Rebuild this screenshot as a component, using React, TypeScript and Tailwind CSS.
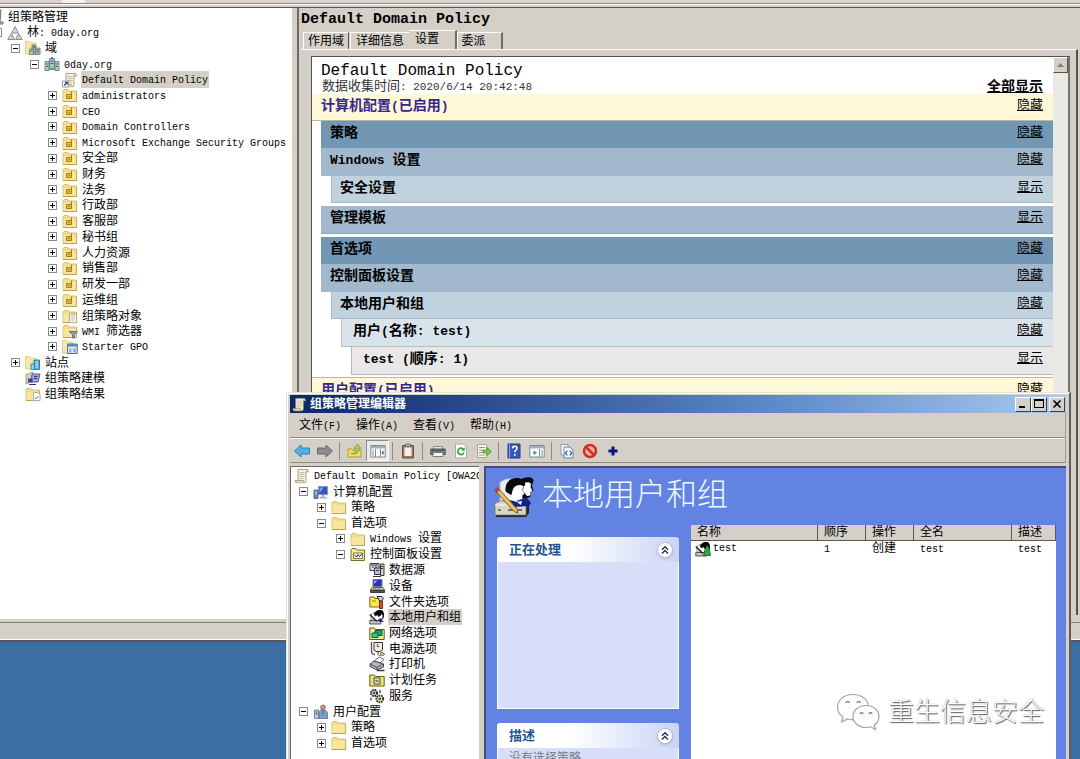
import React from "react";

/* ---------- text ---------- */

type Size = "xs" | "sm" | "md";

const latinSize: Record<Size, string> = {
  xs: "text-[10px]",
  sm: "text-[11px]",
  md: "text-[13px]",
};

function Mixed({ text, size = "xs" }: { text: string; size?: Size }) {
  return (
    <>
      {text.split(/([\x20-\x7e]+)/).map((part, i) =>
        i % 2 === 1 ? (
          <span key={i} className={latinSize[size]}>
            {part}
          </span>
        ) : (
          part
        ),
      )}
    </>
  );
}

/* ---------- small icons (16 x 16) ---------- */

function Svg({ children, className = "size-4" }: { children: React.ReactNode; className?: string }) {
  return (
    <svg viewBox="0 0 16 16" className={`shrink-0 ${className}`} fill="none" aria-hidden="true">
      {children}
    </svg>
  );
}

const FolderShape = () => (
  <>
    <path d="M1 3.500 2 2.500h4l1 1.500h7.500v10.500H1z" fill="#f3dd8c" stroke="#d3b45c" strokeWidth=".8" />
    <path d="M1.500 6h13v8h-13z" fill="#f8e6a0" />
    <path d="M1 14.500h13.600V5" stroke="#b89a48" strokeWidth=".8" />
  </>
);

const SmallFolderShape = () => (
  <path d="M.5 1.500h4l1 1.500H11v11H.5z" fill="#f6e7a4" stroke="#dcc87c" strokeWidth=".8" />
);

const ScrollShape = () => (
  <>
    <path d="M4 1.500h9.500c-1.500 1-1.500 2-1.500 3V13c0 1-.7 1.700-2 1.700H2.500C4 14 4 13 4 12z" fill="#f7f1d8" stroke="#9a9588" strokeWidth=".9" />
    <path d="M12 1.500c1.600 0 2.500.8 2.500 2.500H12M2.500 14.500c-1.300 0-1.700-1-1.500-2h8.500c0 1 .2 2 1.500 2" fill="#e3d9b0" stroke="#9a9588" strokeWidth=".8" />
    <path d="M5.500 4.500h5M5.500 6.500h5M5.500 8.500h5M5.500 10.500h4" stroke="#b5ae98" strokeWidth=".8" />
  </>
);

const icons: Record<string, React.ReactNode> = {
  root: (
    <>
      <path d="M6 1h7l-1 12h3v2H3V9z" fill="#b9bcc0" stroke="#6d7278" />
      <path d="M8 4h3M7 7h4" stroke="#555" />
    </>
  ),
  forest: (
    <>
      <path d="M8 1.500 11.200 8H4.800z" fill="#eceff0" stroke="#84898c" />
      <path d="M4.300 8.500 7.500 14.500H.8zM11.700 8.500l3.500 6H8.500z" fill="#dfe4e4" stroke="#84898c" />
      <path d="M8 1.500v6M4.300 8.500v6M11.700 8.500v6" stroke="#a7b0ae" strokeWidth=".8" />
    </>
  ),
  domains: (
    <>
      <SmallFolderShape />
      <path d="M7 5h4v9H7z" fill="#9aa9a6" stroke="#64716d" strokeWidth=".8" />
      <path d="M4.500 9h4v5.500h-4zM11 8h4v6.500h-4z" fill="#b6c8bd" stroke="#64716d" strokeWidth=".8" />
      <path d="M8 7h2M12 10h2M5.500 11h2M12 12h2" stroke="#3e5c4c" />
    </>
  ),
  domain: (
    <>
      <path d="M5.500 2.500h5v11h-5z" fill="#a9bccb" stroke="#5d7282" strokeWidth=".8" />
      <path d="M1 5.500h4v9H1zM11 5.500h4v9h-4z" fill="#b4cbb9" stroke="#5f7a6a" strokeWidth=".8" />
      <path d="M7 1h2v2H7z" fill="#56809a" />
      <path d="M6.500 5h3M6.500 7.500h3M2 8h2M12 8h2M2 10.500h2M12 10.500h2" stroke="#40687c" />
      <path d="M6.500 12.500h3" stroke="#46b04e" />
    </>
  ),
  link: (
    <>
      <ScrollShape />
      <path d="M.5 9h6v6h-6z" fill="#fff" stroke="#88888f" strokeWidth=".8" />
      <path d="M2 13.500 5 10.500M2.800 10.300H5.200v2.400" stroke="#3a3480" strokeWidth="1.100" />
    </>
  ),
  ou: (
    <>
      <FolderShape />
      <path d="M4.500 7.500h5v4h-5z" fill="#e7c33e" stroke="#a07c1a" />
      <path d="M9.500 4.500v5M6 9.500h2" stroke="#a07c1a" />
    </>
  ),
  gpo: (
    <>
      <FolderShape />
      <path d="M7.500 6h7v7.500c0 1-.5 1.200-1.300 1.200H6.800c.8-.3.700-1 .7-2z" fill="#fbf8e8" stroke="#a09a80" strokeWidth=".8" />
      <path d="M9 8h4M9 10h4M9 12h3" stroke="#b3ab8f" strokeWidth=".8" />
    </>
  ),
  wmi: (
    <>
      <FolderShape />
      <path d="M7 8.500h8.500l-3 3v3.500h-2v-3.500z" fill="#8a9cb4" stroke="#51637c" strokeWidth=".8" />
    </>
  ),
  starter: (
    <>
      <SmallFolderShape />
      <path d="M5.500 5h9.800v9.500H5.500z" fill="#dde8f5" stroke="#51709c" />
      <path d="M5.500 5h9.800v2.500H5.500z" fill="#5c86c0" />
      <path d="M7 9.500h2.500v4H7zM11 9.500h3v4h-3z" fill="#96b4dc" />
    </>
  ),
  sites: (
    <>
      <SmallFolderShape />
      <path d="M9 5h5.500v9.500H9z" fill="#4db2dc" stroke="#2077a4" strokeWidth=".9" />
      <path d="M6 9h3.500v5.500H6z" fill="#8ed0e8" stroke="#2077a4" strokeWidth=".8" />
      <path d="M10.500 7h2.500M10.500 9.500h2.500M10.500 12h2.500" stroke="#e4f6fc" />
    </>
  ),
  modeling: (
    <>
      <path d="M1 4.500 8 2v9l-7 3z" fill="#d8d4b8" stroke="#8c8c84" strokeWidth=".8" />
      <path d="M7 4h8l-2 8H6z" fill="#9fa4d8" stroke="#4a4c92" strokeWidth=".9" />
      <path d="M3 8.500h4.500v4H3z" fill="#40428c" />
      <path d="M9 6.500h3.500M8.700 8.500H12M4 14.500h7" stroke="#33357a" />
    </>
  ),
  results: (
    <>
      <FolderShape />
      <path d="M8.500 6.500H13l2 2v6.200H8.500z" fill="#fff" stroke="#969a9e" strokeWidth=".8" />
      <path d="M10 11.500l1.200 1.500 2.300-3" stroke="#5b7c9c" />
    </>
  ),
  scroll: <ScrollShape />,
  computer: (
    <>
      <path d="M5.500 2.500h9v8h-9z" fill="#3056c8" stroke="#8c96a6" />
      <path d="M6.500 3.500h4l-3.500 5h-.5z" fill="#7ea0f0" />
      <path d="M8.500 11h3v2h-3zM6.500 13h7.500v1.500H6.500z" fill="#a7afba" />
      <path d="M1 6h4v8.500H1z" fill="#6c86ae" stroke="#40577c" strokeWidth=".8" />
      <path d="M2 8h2M2 10h2" stroke="#d8e4f4" />
    </>
  ),
  user: (
    <>
      <circle cx="10" cy="3.500" r="2.500" fill="#c59674" stroke="#77533c" strokeWidth=".6" />
      <path d="M6 14.500V9c0-2 1.500-3 4-3s4.500 1 4.500 3.500v5z" fill="#7ba0c8" stroke="#4f7399" strokeWidth=".8" />
      <path d="M1.500 6h4v8.500h-4z" fill="#c2ccd4" stroke="#64727f" strokeWidth=".8" />
      <path d="M2.500 8h2M2.500 10h2M10 6.500v4" stroke="#3b5872" />
    </>
  ),
  folder: <FolderShape />,
  control: (
    <>
      <path d="M1 3.500 2 2.500h4l1 1.500h7.500v10.500H1z" fill="#f4e98a" stroke="#77702c" />
      <path d="M3.500 7h9v5.500h-9z" fill="#fffdd8" stroke="#555" strokeWidth=".8" />
      <path d="m4.500 9 2 2 1.500-2.500 1.500 2L12 8" stroke="#222" />
    </>
  ),
  data: (
    <>
      <path d="M1 1.500h9v7H1z" fill="#e0e2e8" stroke="#444" />
      <path d="M2 3h7M3 5h2M6 5h2" stroke="#333" />
      <path d="M5.500 6h6v6.500h-6z" fill="#b8c0e8" stroke="#333" />
      <path d="M11.500 2h3.500v11.500h-3.500z" fill="#d4d4d4" stroke="#333" />
      <path d="M12 4.500h2M12 6.500h2M7 8.500h3M4 14.500h8" stroke="#333" />
    </>
  ),
  device: (
    <>
      <path d="M4 1.500h9v7H4z" fill="#2a34b8" stroke="#777" />
      <path d="M5 2.500h3.500L5 6z" fill="#8fa0ff" />
      <path d="M3 9.500h11l1.500 2.500H1.500z" fill="#d4d4dc" stroke="#444" strokeWidth=".8" />
      <path d="M1.500 12.500h14v2h-14z" fill="#4b4ba0" stroke="#222" strokeWidth=".8" />
      <path d="M4 10.800h8" stroke="#555" strokeDasharray="1 1" />
    </>
  ),
  folderopt: (
    <>
      <path d="M.8 3h4l1 1.500h5V13H.8z" fill="#ffe94c" stroke="#776a10" />
      <path d="M8 2.500h5l1.500 2-2 2.500h-2z" fill="#c8ccd2" stroke="#222" strokeWidth=".9" />
      <path d="M10.500 7h3v7.500h-3z" fill="#e04838" stroke="#511" strokeWidth=".8" />
      <path d="M3 7h4" stroke="#a08c10" />
    </>
  ),
  people: (
    <>
      <path d="M2 5.500 6 3l1.500 8H2z" fill="#fff" stroke="#666" strokeWidth=".7" />
      <path d="M5 6c0-3 3-5 6-5s4 2 4 5c0 2-.5 3.500-1.500 4.500L12 6.500 9 8z" fill="#060608" />
      <path d="M6 7.500 8.500 6l1.500 5-3 1zM12 5l1.500 1v3L12 10z" fill="#fff" />
      <path d="M.8 11.500h11v3.500H.8z" fill="#c6c6c0" stroke="#333" strokeWidth=".8" />
      <path d="M8 11.500 12 9l2.500 4h-3z" fill="#1c2490" />
      <path d="m.8 5.500 7 7" stroke="#222" strokeWidth="1.400" />
    </>
  ),
  network: (
    <>
      <path d="M.8 3h4.500l1 1.500h8.900v10H.8z" fill="#f6eb94" stroke="#5d5720" />
      <path d="M6 5.500h7v5H6z" fill="#18a478" stroke="#063" />
      <path d="M3 8h6v4.500H3z" fill="#36c898" stroke="#063" />
    </>
  ),
  power: (
    <>
      <path d="M2.500 1v9c0 2 1 3.500 3.500 3.500" stroke="#555" strokeWidth="1.300" />
      <path d="M5 1.500h8.500v7.500L11 10.500H7L5 9z" fill="#f0f0ea" stroke="#333" />
      <path d="M8.500 3v2.500h2" stroke="#d03838" strokeWidth="1.200" />
      <path d="M9 10.500v2c0 1.500 1 2 2.500 2" stroke="#333" />
      <path d="m11 12.500 2-1.500 2.500 2-2 2z" fill="#e8dc6c" stroke="#333" strokeWidth=".8" />
    </>
  ),
  printer: (
    <>
      <path d="m5 5 5.500-4L15 3.500 11 7z" fill="#fff" stroke="#555" strokeWidth=".9" />
      <path d="M1 8 5 5l9.500 3v3L8 14 1 10.500z" fill="#b4b8bc" stroke="#333" strokeWidth=".9" />
      <path d="m1 8 7 3.500L14.500 8M8 11.500V14" stroke="#444" strokeWidth=".9" />
      <path d="M8 14.500h7.500" stroke="#246" strokeWidth="1.500" />
    </>
  ),
  schedule: (
    <>
      <path d="M.8 3h4.500l1 1.500h8.900v9.500H.8z" fill="#eee466" stroke="#66601c" />
      <path d="M5 6h6v6H5z" fill="#fffff0" stroke="#444" />
      <path d="M7 7.500v3M9 7.500v3M6.500 9h3" stroke="#444" strokeWidth=".8" />
    </>
  ),
  services: (
    <>
      <circle cx="5" cy="5" r="3" fill="#e4e4e4" stroke="#222" strokeWidth="2" strokeDasharray="1.600 .8" />
      <circle cx="5" cy="5" r="1.200" fill="#444" />
      <circle cx="10.800" cy="10.800" r="3.400" fill="#eee6a0" stroke="#333" strokeWidth="2" strokeDasharray="1.600 .8" />
      <circle cx="10.800" cy="10.800" r="1.400" fill="#555" />
      <path d="M2 9.500v3M11 2v3" stroke="#555" strokeWidth="1.500" />
    </>
  ),
};

/* ---------- tree ---------- */

type Node = { depth: 0 | 1 | 2 | 3 | 4; icon: string; label: string; open?: boolean; selected?: boolean };

function Expander({ open }: { open?: boolean }) {
  if (open === undefined) return <span className="w-[9px] shrink-0" />;
  return (
    <button
      aria-label={open ? "折叠" : "展开"}
      className="flex size-[9px] shrink-0 items-center justify-center border border-[#8a8a8a] bg-white"
    >
      <svg viewBox="0 0 5 5" className="size-[5px]" shapeRendering="crispEdges" aria-hidden="true">
        <path d={open ? "M0 2h5v1H0z" : "M0 2h5v1H0zM2 0h1v5H2z"} fill="#000" />
      </svg>
    </button>
  );
}

function Tree({ nodes, indent, className }: { nodes: Node[]; indent: string[]; className: string }) {
  return (
    <ul className={`flex flex-col pt-px ${className}`}>
      {nodes.map((n, i) => (
        <li key={i} className={`flex min-h-0 flex-1 items-center ${indent[n.depth]}`}>
          <Expander open={n.open} />
          <span className="ml-[5px] mr-[3px] flex">
            <Svg>{icons[n.icon]}</Svg>
          </span>
          <span
            className={`whitespace-pre px-px pt-0.5 text-xs leading-[14px] ${n.selected ? "bg-[#d4d0c8]" : ""}`}
          >
            <Mixed text={n.label} />
          </span>
        </li>
      ))}
    </ul>
  );
}

const ous: Node[] = [
  "administrators",
  "CEO",
  "Domain Controllers",
  "Microsoft Exchange Security Groups",
  "安全部",
  "财务",
  "法务",
  "行政部",
  "客服部",
  "秘书组",
  "人力资源",
  "销售部",
  "研发一部",
  "运维组",
].map((label) => ({ depth: 4, icon: "ou", label, open: false }));

const consoleNodes: Node[] = [
  { depth: 0, icon: "root", label: "组策略管理" },
  { depth: 1, icon: "forest", label: "林: 0day.org", open: true },
  { depth: 2, icon: "domains", label: "域", open: true },
  { depth: 3, icon: "domain", label: "0day.org", open: true },
  { depth: 4, icon: "link", label: "Default Domain Policy", selected: true },
  ...ous,
  { depth: 4, icon: "gpo", label: "组策略对象", open: false },
  { depth: 4, icon: "wmi", label: "WMI 筛选器", open: false },
  { depth: 4, icon: "starter", label: "Starter GPO", open: false },
  { depth: 2, icon: "sites", label: "站点", open: false },
  { depth: 2, icon: "modeling", label: "组策略建模" },
  { depth: 2, icon: "results", label: "组策略结果" },
];

const editorNodes: Node[] = [
  { depth: 0, icon: "scroll", label: "Default Domain Policy [OWA2C" },
  { depth: 1, icon: "computer", label: "计算机配置", open: true },
  { depth: 2, icon: "folder", label: "策略", open: false },
  { depth: 2, icon: "folder", label: "首选项", open: true },
  { depth: 3, icon: "folder", label: "Windows 设置", open: false },
  { depth: 3, icon: "control", label: "控制面板设置", open: true },
  { depth: 4, icon: "data", label: "数据源" },
  { depth: 4, icon: "device", label: "设备" },
  { depth: 4, icon: "folderopt", label: "文件夹选项" },
  { depth: 4, icon: "people", label: "本地用户和组", selected: true },
  { depth: 4, icon: "network", label: "网络选项" },
  { depth: 4, icon: "power", label: "电源选项" },
  { depth: 4, icon: "printer", label: "打印机" },
  { depth: 4, icon: "schedule", label: "计划任务" },
  { depth: 4, icon: "services", label: "服务" },
  { depth: 1, icon: "user", label: "用户配置", open: true },
  { depth: 2, icon: "folder", label: "策略", open: false },
  { depth: 2, icon: "folder", label: "首选项", open: false },
];

/* ---------- settings report ---------- */

const reportRows = [
  { text: "计算机配置(已启用)", action: "隐藏", cls: "h-[27px] pl-[9px] bg-[#fff8d8] border-b border-[#b9b79c] text-[#33278c]" },
  { text: "策略", action: "隐藏", cls: "h-[27px] ml-[9px] pl-[9px] bg-[#7197b4]" },
  { text: "Windows 设置", action: "隐藏", cls: "h-7 ml-[9px] pl-[9px] bg-[#a2b9cd]" },
  { text: "安全设置", action: "显示", cls: "h-[27px] ml-[19px] mb-[3px] pl-2 bg-[#c0d2de] border-b border-l border-[#a9b8c4]" },
  { text: "管理模板", action: "显示", cls: "h-7 ml-[9px] mb-[3px] pl-[9px] bg-[#a2b9cd] border-b border-[#8fa3b3]" },
  { text: "首选项", action: "隐藏", cls: "h-[27px] ml-[9px] pl-[9px] bg-[#7197b4]" },
  { text: "控制面板设置", action: "隐藏", cls: "h-7 ml-[9px] pl-[9px] bg-[#a2b9cd]" },
  { text: "本地用户和组", action: "隐藏", cls: "h-[27px] ml-[19px] pl-2 bg-[#c0d2de] border-b border-l border-[#a9b8c4]" },
  { text: "用户(名称: test)", action: "隐藏", cls: "h-7 ml-[29px] pl-[11px] bg-[#d9e3ea] border-b border-l border-[#b4bec6]" },
  { text: "test (顺序: 1)", action: "显示", cls: "h-7 ml-[39px] mb-[2px] pl-[11px] bg-[#e8e8e8] border-b border-l border-[#b8b8b8]" },
  { text: "用户配置(已启用)", action: "隐藏", cls: "h-[27px] pl-[9px] bg-[#fff8d8] border-t border-[#b9b79c] text-[#33278c]" },
];

function Report() {
  return (
    <div className="flex min-h-0 flex-1 border-l border-t border-[#55534f] bg-white">
      <div className="flex min-w-0 flex-1 flex-col overflow-hidden pt-[5px]">
        <h2 className="pl-[9px] text-base leading-[18px] text-black">Default Domain Policy</h2>
        <div className="flex h-[14px] items-center justify-between pl-[10px] pr-[10px]">
          <span className="whitespace-pre text-[13px] leading-4 text-[#333]">
            <Mixed text="数据收集时间: 2020/6/14 20:42:48" size="sm" />
          </span>
          <a href="#all" className="text-sm font-bold leading-4 underline">
            全部显示
          </a>
        </div>
        {reportRows.map((r, i) => (
          <div key={i} className={`flex shrink-0 items-start justify-between pr-[10px] ${r.cls}`}>
            <h3 className="whitespace-pre text-sm font-bold leading-6">
              <Mixed text={r.text} size="md" />
            </h3>
            <a href="#section" className="text-[13px] leading-6 text-black underline">
              {r.action}
            </a>
          </div>
        ))}
      </div>
      <div className="w-[17px] border-r-2 border-[#77746e] bg-[#ebe9e5]">
        <button
          aria-label="向上滚动"
          className="flex h-4 w-[15px] items-center justify-center border border-b-[#55534f] border-l-white border-r-[#55534f] border-t-white bg-[#d4d0c8]"
        >
          <svg viewBox="0 0 7 4" className="h-1 w-[7px]" aria-hidden="true">
            <path d="M3.500 0 7 4H0z" fill="#858078" />
          </svg>
        </button>
      </div>
    </div>
  );
}

const tabBase = "flex h-[17px] items-end justify-center border-l border-t border-white text-xs leading-[14px]";

function ConsoleWindow() {
  return (
    <section className="absolute inset-x-0 bottom-[117px] top-0 flex flex-col border-b-2 border-[#55595c] bg-[#d4d0c8]">
      <div className="h-1 border-b border-[#8d8782] bg-[#dad3d0] pl-[62px]">
        <div className="h-[3px] w-[23px] bg-[#f3f2f0]" />
      </div>
      <div className="h-1 border-b border-t border-b-[#5c5858] border-t-white" />
      <div className="flex min-h-0 flex-1">
        <nav className="w-[292px] shrink-0 overflow-hidden bg-white">
          <Tree
            nodes={consoleNodes}
            className="h-[394px]"
            indent={["-ml-[26px]", "-ml-[7px]", "pl-[11px]", "pl-[30px]", "pl-[48px]"]}
          />
        </nav>
        <div className="ml-[5px] mr-0.5 flex min-w-0 flex-1 flex-col border-l-2 border-[#6e6a66] pb-1">
          <h1 className="pl-0.5 pt-0.5 text-[15px] font-bold leading-5 text-black">Default Domain Policy</h1>
          <div role="tablist" className="flex items-end pl-1">
            <button role="tab" className={`${tabBase} w-[46px] border-r border-r-[#55534f]`}>作用域</button>
            <button role="tab" className={`${tabBase} ml-px w-[59px]`}>详细信息</button>
            <button
              role="tab"
              aria-selected="true"
              className="flex h-[19px] w-[48px] items-center justify-center border-r-2 border-t border-r-[#6e6a66] border-t-white pr-2.5 text-xs leading-[14px]"
            >
              设置
            </button>
            <button role="tab" className={`${tabBase} w-[46px] border-r-2 border-r-[#6e6a66] pr-3`}>委派</button>
          </div>
          <div className="ml-0.5 flex min-h-0 flex-1 flex-col border-r-2 border-t border-r-[#55534f] border-t-white pb-2 pl-[10px] pr-[6px] pt-[6px]">
            <Report />
          </div>
        </div>
      </div>
      <div className="flex h-[21px] flex-col border-b border-white">
        <div className="mt-[3px] h-px bg-[#807d78]" />
      </div>
    </section>
  );
}

/* ---------- editor window ---------- */

const WindowGlyph = ({ flip }: { flip?: boolean }) => (
  <>
    <path d="M.8 2.500h14.400v11.500H.8z" fill="#fff" stroke="#7d8896" />
    <path d="M1 3h14v2.500H1z" fill="#9fb0c4" />
    <path d={flip ? "M10.500 6v8M12 8h2M12 10h2M12 12h2" : "M5.500 6v8M2 8h2M2 10h2M2 12h2M10.500 6v8"} stroke="#7d8896" />
    <path d={flip ? "m4.500 7.500 3.500 2.300-3.500 2.300z" : "M13.500 7.500 11.500 9.800l2 2.300z"} fill={flip ? "#2f9a44" : "#345"} />
  </>
);

const tools: (null | { label: string; art: React.ReactNode; pressed?: boolean })[] = [
  { label: "后退", art: <path d="M.5 8 7 2v3h8.500v6H7v3z" fill="#4fb0e6" stroke="#2a78ae" strokeWidth=".9" /> },
  { label: "前进", art: <path d="M15.500 8 9 2v3H.5v6H9v3z" fill="#8c8c8c" stroke="#626262" strokeWidth=".9" /> },
  null,
  {
    label: "上移",
    art: (
      <>
        <path d="M1 6h4l1 1.500h8V14H1z" fill="#f0dc70" stroke="#b59a3c" />
        <path d="M4 10.500c4 0 5-2 5-5H7L10.500 1 14 5.500h-2c0 4-2.500 6.500-8 5z" fill="#b4d24c" stroke="#7c9a2a" strokeWidth=".8" />
      </>
    ),
  },
  { label: "显示树", art: <WindowGlyph />, pressed: true },
  null,
  {
    label: "粘贴",
    art: (
      <>
        <path d="M2.500 2.500h11v12.500h-11z" fill="#9b7a5c" stroke="#6b5038" />
        <path d="M4.500 4.500h7V13h-7z" fill="#f4f2ee" />
        <path d="M5.500 1h5v2.500h-5z" fill="#a9adb2" stroke="#666" strokeWidth=".7" />
      </>
    ),
  },
  null,
  {
    label: "打印",
    art: (
      <>
        <path d="M3.500 3.500h9v3h-9z" fill="#e8e8e8" stroke="#777" strokeWidth=".8" />
        <path d="M.8 6h14.400v5.500H.8z" fill="#7c8086" stroke="#4c5056" />
        <path d="M3 9.500h10v4H3z" fill="#f4f4f4" stroke="#666" strokeWidth=".8" />
        <path d="M2 7.500h12" stroke="#33373c" strokeDasharray="1.500 1" />
      </>
    ),
  },
  {
    label: "刷新",
    art: (
      <>
        <path d="M2.500 1h8l3 3v11h-11z" fill="#fff" stroke="#a6aaa6" />
        <path d="M11 9.500A3.200 3.200 0 1 1 10.500 6.300" stroke="#38a548" strokeWidth="1.700" />
        <path d="M11.800 4v3.800H8.300z" fill="#38a548" />
      </>
    ),
  },
  {
    label: "导出列表",
    art: (
      <>
        <path d="M1.500 1.500h9v13h-9z" fill="#fcf9e2" stroke="#aaa68c" />
        <path d="M3 4.500h6M3 7h4M3 9.500h4M3 12h6" stroke="#8d95a0" />
        <path d="M7 7h4V4.500l4.500 4-4.500 4V10H7z" fill="#7cc44c" stroke="#4c8c2c" strokeWidth=".7" />
      </>
    ),
  },
  null,
  {
    label: "帮助",
    art: (
      <>
        <path d="M2 1h12v14H2z" fill="#3659b8" stroke="#1f3a86" />
        <path d="M3.500 1v14" stroke="#8ca4e4" />
        <path d="M6.500 5.500c0-3 4.500-3 4.500-.3 0 1.800-2.200 1.800-2.200 4M8.800 11v1.700" stroke="#fff" strokeWidth="1.600" />
      </>
    ),
  },
  { label: "操作窗格", art: <WindowGlyph flip /> },
  null,
  {
    label: "属性",
    art: (
      <>
        <path d="M2 1.500h7V12H2z" fill="#fff" stroke="#8a94a4" />
        <path d="M5 4h6l3 3v8H5z" fill="#eef3fa" stroke="#6f7f96" />
        <path d="m8.300 8-2 2.200 2 2.200M10.800 8l2 2.200-2 2.200" stroke="#2d62a0" strokeWidth="1.200" />
      </>
    ),
  },
  {
    label: "停止",
    art: (
      <>
        <circle cx="8" cy="8" r="6" fill="#f2b4a8" stroke="#cf3224" strokeWidth="2.500" />
        <path d="m4 4 8 8" stroke="#cf3224" strokeWidth="2.500" />
      </>
    ),
  },
  { label: "新建", art: <path d="M6.500 3.500h3v3h3v3h-3v3h-3v-3h-3v-3h3z" fill="#10107c" /> },
];

function Toolbar() {
  return (
    <div role="toolbar" className="flex h-[25px] items-center border-b border-t border-b-[#8e8a84] border-t-white">
      {tools.map((t, i) =>
        t === null ? (
          <span key={i} className="mx-[3px] h-[18px] w-px bg-[#8e8a84]" />
        ) : (
          <button
            key={i}
            aria-label={t.label}
            className={`flex h-[21px] w-[23px] items-center justify-center ${
              t.pressed ? "border border-b-white border-l-[#8e8a84] border-r-white border-t-[#8e8a84] bg-[#ebe9e5]" : ""
            }`}
          >
            <Svg>{t.art}</Svg>
          </button>
        ),
      )}
    </div>
  );
}

const winButton =
  "flex h-[15px] w-4 items-center justify-center border border-b-[#404040] border-l-white border-r-[#404040] border-t-white bg-[#d4d0c8]";

function TaskBox({ title, className, children }: { title: string; className: string; children?: React.ReactNode }) {
  return (
    <section className={`flex flex-col ${className}`}>
      <header className="flex h-[25px] shrink-0 items-center justify-between rounded-t-[3px] bg-linear-to-r from-white from-40% to-[#c9d5f5] pl-3 pr-[6px]">
        <h3 className="pt-0.5 text-[13px] font-bold leading-4 text-[#22558f]">{title}</h3>
        <button aria-label="折叠" className="flex size-4 items-center justify-center rounded-full border border-[#b6c0d8] bg-white shadow-sm">
          <svg viewBox="0 0 8 8" className="size-2" fill="none" stroke="#222c50" strokeWidth="1.300" aria-hidden="true">
            <path d="m1 3.700 3-3 3 3M1 7.500l3-3 3 3" />
          </svg>
        </button>
      </header>
      <div className="flex-1 border border-t-0 border-white bg-[#d6dff7] pl-[11px] pt-[3px] text-xs leading-4 text-[#777c88]">{children}</div>
    </section>
  );
}

function PeopleArt() {
  return (
    <svg viewBox="0 0 40 42" className="h-[42px] w-10 shrink-0" aria-hidden="true">
      <path d="M6 6 12 3h8v25H6z" fill="#e9eef4" stroke="#a8b0bc" />
      <path d="M2 29h33v8l-3 4H2z" fill="#22242a" />
      <path d="M1 27.500 6 25h29l-3 3.500V39H1z" fill="#d8d6ca" stroke="#77756c" strokeWidth=".8" />
      <path d="M1 29h31" stroke="#f8f7ee" />
      <path d="M4 33h3v2H4z" fill="#4c9a4a" />
      <path d="M14 34h14" stroke="#55534c" strokeWidth="1.500" />
      <path d="M26 4c3-3 11-4 13-1 1.500 2-1 4-1 7l1.500 5-2.500 1v4l-5 3-8-3z" fill="#08080c" />
      <path d="M30 7c3-1 6-1 7 1l-.500 3 2 4-2 1v3.500l-3.500.500-4-5z" fill="#fff" />
      <path d="M12 10C13 4 20 1 26 2.500c4 1 6 4 5 7L22 13l-2 8-6-4c-3-1-3-4-2-7z" fill="#08080c" />
      <path d="M19 13c2-4 7-5 10-3l-.500 4 2 4-2 1-.500 4-5 1v4l-7-4z" fill="#fff" />
      <path d="m16 24 7 2 5-3 4-2 5 6-2 3-15 1z" fill="#16208c" />
      <path d="m23 26 4 3 1-4z" fill="#fff" />
      <path d="m.500 14 3-2.500L23 33l1 4-4-1.500z" fill="#e9c25a" stroke="#6f4c18" strokeWidth=".9" />
      <path d="m.500 14 3-2.500 2.500 2.700-3 2.500z" fill="#b6443c" />
    </svg>
  );
}

const th = "h-4 border-b border-r border-b-[#5c5a55] border-r-[#5c5a55] bg-[#d4d0c8] p-0 pl-[6px] pt-0.5 text-left font-normal leading-[13px]";
const td = "h-4 p-0 pl-[6px] pt-px leading-[15px]";

function EditorWindow() {
  return (
    <section className="absolute bottom-0 left-[286px] right-[9px] top-[392px] flex flex-col border-l border-r-2 border-t border-l-[#e6e3de] border-r-[#5f5d5a] border-t-[#e6e3de] bg-[#d4d0c8] shadow-[inset_1px_1px_0_#fff]">
      <header className="mx-[3px] mt-[2px] flex h-[18px] shrink-0 items-center bg-linear-to-r from-[#0c2668] via-[#5b86c4] via-60% to-[#a6caf0] pl-[2px] pr-px">
        <Svg className="size-[15px]">
          <ScrollShape />
        </Svg>
        <h2 className="ml-[3px] flex-1 pt-0.5 text-xs font-bold text-white">组策略管理编辑器</h2>
        <button aria-label="最小化" className={winButton}>
          <svg viewBox="0 0 10 10" className="size-[10px]" aria-hidden="true"><path d="M1 7h6v2H1z" /></svg>
        </button>
        <button aria-label="最大化" className={winButton}>
          <svg viewBox="0 0 10 10" className="size-[10px]" aria-hidden="true"><path d="M0 0h10v9H0zM1 2v6h8V2z" fillRule="evenodd" /></svg>
        </button>
        <button aria-label="关闭" className={`${winButton} ml-0.5`}>
          <svg viewBox="0 0 10 10" className="size-[10px]" aria-hidden="true"><path d="m1.500 1.500 7 7m0-7-7 7" stroke="#000" strokeWidth="1.700" /></svg>
        </button>
      </header>
      <div className="mx-[3px] flex flex-col border-r border-[#a09c96]">
        <div role="menubar" className="flex h-[25px] items-center gap-[15px] border-b border-[#8e8a84] pl-[9px] pt-[3px]">
          {["文件(F)", "操作(A)", "查看(V)", "帮助(H)"].map((m) => (
            <button key={m} role="menuitem" className="text-xs leading-4">
              <Mixed text={m} />
            </button>
          ))}
        </div>
        <Toolbar />
      </div>
      <div className="mx-[3px] mt-[3px] flex min-h-0 flex-1">
        <nav className="w-[189px] shrink-0 overflow-hidden border-l border-t border-[#6b6864] bg-white">
          <Tree
            nodes={editorNodes}
            className="h-[284px]"
            indent={["-ml-[11px]", "pl-[8px]", "pl-[26px]", "pl-[45px]", "pl-[64px]"]}
          />
        </nav>
        <div className="ml-[5px] flex min-w-0 flex-1 flex-col border-l-2 border-t-2 border-[#45506e] bg-[#6283e1]">
          <header className="flex h-[57px] shrink-0 items-center gap-2 pl-2">
            <PeopleArt />
            <h1 className="text-[31px] font-light leading-9 text-[#eefaff]">本地用户和组</h1>
          </header>
          <div className="flex min-h-0 flex-1 gap-3 pl-[11px] pr-[10px]">
            <aside className="flex w-[182px] shrink-0 flex-col gap-[14px] overflow-hidden pt-[12px]">
              <TaskBox title="正在处理" className="h-[172px] shrink-0" />
              <TaskBox title="描述" className="h-[100px] shrink-0">没有选择策略</TaskBox>
            </aside>
            <div className="min-w-0 flex-1 bg-white">
              <table className="w-full table-fixed border-separate border-spacing-0 text-xs">
                <colgroup>
                  <col />
                  <col className="w-12" />
                  <col className="w-12" />
                  <col className="w-[98px]" />
                  <col className="w-11" />
                </colgroup>
                <thead>
                  <tr>
                    <th className={th}>名称</th>
                    <th className={th}>顺序</th>
                    <th className={th}>操作</th>
                    <th className={th}>全名</th>
                    <th className={th}>描述</th>
                  </tr>
                </thead>
                <tbody>
                  <tr>
                    <td className="h-4 p-0 pl-1">
                      <span className="flex h-4 items-center gap-0.5">
                        <Svg>
                          {icons.people}
                          <path d="m12 4.500 2.500 4 1 6h-7l1.500-6z" fill="#2fa83c" stroke="#0d5a18" strokeWidth=".7" />
                        </Svg>
                        <Mixed text="test" />
                      </span>
                    </td>
                    <td className={td}><Mixed text="1" /></td>
                    <td className={td}>创建</td>
                    <td className={td}><Mixed text="test" /></td>
                    <td className={td}><Mixed text="test" /></td>
                  </tr>
                </tbody>
              </table>
            </div>
          </div>
        </div>
      </div>
    </section>
  );
}

function Watermark() {
  return (
    <div className="absolute bottom-7 right-9 flex items-center gap-2">
      <svg viewBox="0 0 44 38" className="h-[38px] w-[44px]" fill="#fff" stroke="#a2a2a2" strokeWidth="1.200" aria-hidden="true">
        <path d="M17 1.500C8 1.500 1.500 7 1.500 14c0 4 2 7.500 5.500 10l-1.500 5 6-3c1.700.5 3.500.8 5.500.8 9 0 15.500-5.800 15.500-12.800S26 1.500 17 1.500z" />
        <path d="M30 12.500c-7.500 0-13 5-13 11s5.500 11 13 11c1.700 0 3.200-.2 4.600-.7l4.900 2.700-1.300-4.300c3-2 4.800-5.200 4.800-8.700 0-6-5.500-11-13-11z" />
        <path d="M10 10c.5-2 3-2 3.500 0M21 10c.5-2 3-2 3.500 0M24 21c.5-2 2.700-2 3.200 0M33 21c.5-2 2.700-2 3.200 0" fill="none" stroke="#666" />
      </svg>
      <span className="pt-1 text-[26px] font-light leading-8 text-white [text-shadow:1px_1px_1px_#555,0_0_1px_#888]">重生信息安全</span>
    </div>
  );
}

export default function App() {
  return (
    <main className="relative h-screen overflow-hidden bg-[#3a6ea5] font-['Liberation_Mono','Noto_Sans_CJK_SC',monospace] text-black">
      <ConsoleWindow />
      <EditorWindow />
      <Watermark />
    </main>
  );
}
